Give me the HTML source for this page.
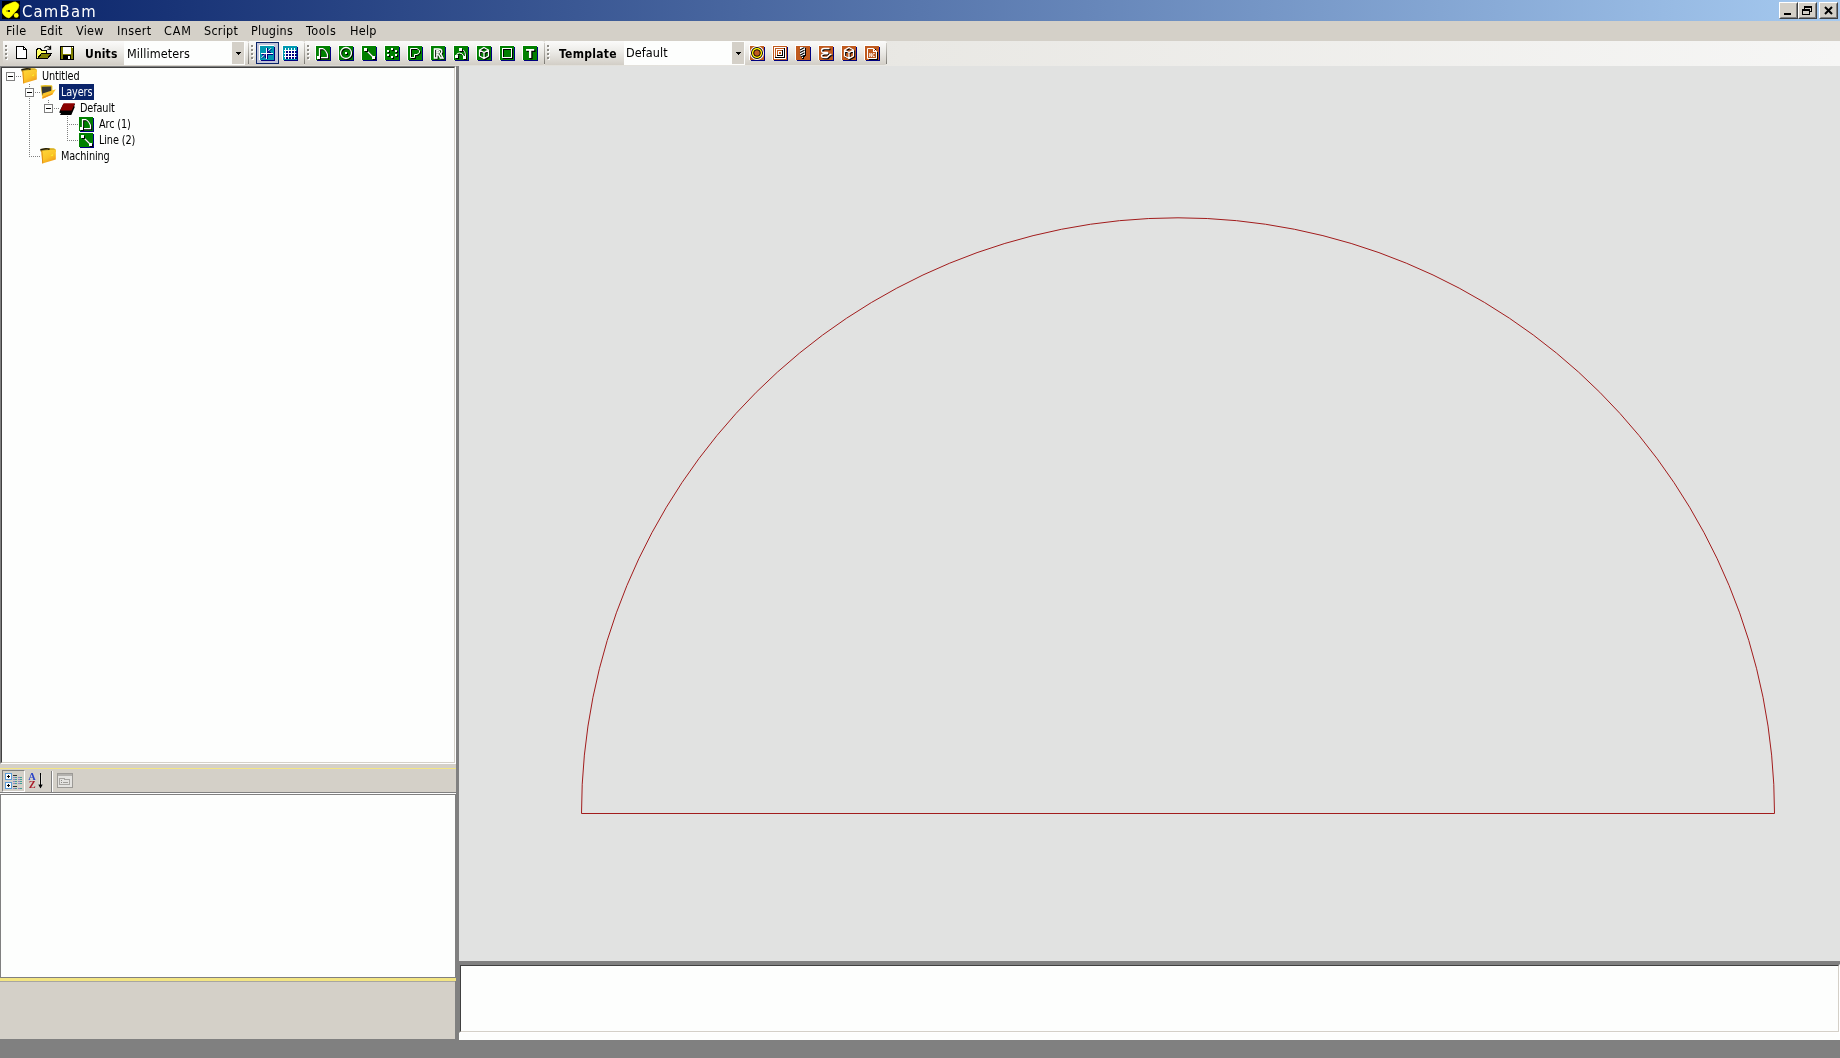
<!DOCTYPE html>
<html><head><meta charset="utf-8"><title>CamBam</title>
<style>
html,body{margin:0;padding:0;}
body{width:1840px;height:1058px;overflow:hidden;background:#808080;position:relative;font-family:"DejaVu Sans Condensed","DejaVu Sans","Liberation Sans",sans-serif;color:#000;}
#wrap{position:absolute;left:0;top:0;width:1840px;height:1058px;will-change:transform;}
.a{position:absolute;}
svg{position:absolute;overflow:hidden;}
.cr{shape-rendering:crispEdges;}
#title{left:0;top:0;width:1840px;height:21px;background:linear-gradient(90deg,#0a246a 0%,#a6caf0 100%);}
#cap{left:22px;top:2px;font-size:16.5px;line-height:20px;color:#fff;white-space:nowrap;letter-spacing:1.2px;}
.wb{top:2px;width:19px;height:17px;background:#d4d0c8;box-sizing:border-box;border:1px solid;border-color:#fff #404040 #404040 #fff;}
.wb i{position:absolute;left:0;top:0;right:0;bottom:0;border:1px solid;border-color:#d4d0c8 #808080 #808080 #d4d0c8;}
#menu{left:0;top:21px;width:1840px;height:20px;background:#d4d0c8;font-size:12.5px;letter-spacing:0.25px;}
#menu span{position:absolute;top:0;line-height:20px;white-space:nowrap;}
#tbrow{left:0;top:41px;width:1840px;height:25px;background:linear-gradient(90deg,#d4d0c8 0%,#e9e8e4 49%,#f6f6f5 100%);}
.strip{position:absolute;top:0;height:24px;background:linear-gradient(180deg,#fbfbfa 0%,#ecebe7 45%,#d2cec6 100%);border-radius:0 3px 3px 0;}
.strip .edge{position:absolute;right:0;top:2px;bottom:1px;width:1px;background:linear-gradient(180deg,#d0cec8,#7c7a74);}
.grip{position:absolute;left:2px;top:4px;width:3px;height:15px;}
.grip b{position:absolute;left:0;width:2px;height:2px;background:#8e8c86;box-shadow:1px 1px 0 #fff;}
.lbl{position:absolute;top:41px;height:24px;line-height:26px;font-size:12px;font-weight:bold;white-space:nowrap;letter-spacing:0.3px;}
.combo{position:absolute;top:41px;height:24px;background:#fdfefd;}
.combo span{position:absolute;left:3px;top:0;line-height:26px;font-size:12.5px;white-space:nowrap;letter-spacing:0.1px;}
.combo .btn{position:absolute;right:1px;top:1px;width:12px;height:22px;background:#d4d0c8;}
.combo .btn i{position:absolute;left:4px;top:10px;width:5px;height:1px;background:#000;box-shadow:0 0 0 #000;}
.combo .btn i:before{content:'';position:absolute;left:1px;top:1px;width:3px;height:1px;background:#000;}
.combo .btn i:after{content:'';position:absolute;left:2px;top:2px;width:1px;height:1px;background:#000;}
#tree{left:0;top:66px;width:456px;height:698px;background:#fdfefd;box-sizing:border-box;border:1px solid;border-color:#808080 #fff #fff #808080;}
#tree .in{position:absolute;left:0;top:0;right:0;bottom:0;border:1px solid;border-color:#404040 #d4d0c8 #d4d0c8 #404040;}
.tl{position:absolute;font-size:10.8px;line-height:16px;height:16px;white-space:nowrap;letter-spacing:-0.12px;transform:scaleY(1.09);transform-origin:0 12px;margin-top:1px;}
.eb{position:absolute;width:9px;height:9px;box-sizing:border-box;border:1px solid #808080;background:#fdfefd;}
.eb i{position:absolute;left:1px;top:3px;width:5px;height:1px;background:#000;margin:0;}
.dh{position:absolute;height:1px;background:repeating-linear-gradient(90deg,#808080 0,#808080 1px,transparent 1px,transparent 2px);}
.dv{position:absolute;width:1px;background:repeating-linear-gradient(180deg,#808080 0,#808080 1px,transparent 1px,transparent 2px);}
#leftbg{left:0;top:764px;width:455px;height:275px;background:#d4d0c8;}
#leftbg2{left:0;top:764px;width:456px;height:30px;background:#d4d0c8;}
#draw{left:459px;top:66px;width:1381px;height:895px;background:#e1e2e1;}
#log{left:459px;top:964px;width:1381px;height:69px;background:#fdfefd;box-sizing:border-box;border:1px solid;border-color:#808080 #fff #fff #808080;}
#log .in{position:absolute;left:0;top:0;right:0;bottom:0;border:1px solid;border-color:#404040 #d4d0c8 #d4d0c8 #404040;}
</style></head><body>
<div id="wrap">
<div id="title" class="a">
<svg style="left:2px;top:1px" width="18" height="18" viewBox="2 1 18 18"><rect x="2" y="1" width="18" height="18" fill="#000"/><g fill="#ffff00"><polygon points="15.6,1.9 18.3,3.7 18.9,5.4 18.1,8.3 16.6,10.4 14.6,12.5 12.9,14.6 11.2,16.4 8.9,17.9 6.2,17.1 4.2,15.4 2.7,13.3 2.1,11.2 2.7,8.7 4.2,6.9 5.4,5.4 8.3,4.2 11.2,3.1 13.7,2.1" stroke="#ffff00" stroke-width=".6" stroke-linejoin="round"/><circle cx="16.25" cy="15.4" r="2.4"/></g><circle cx="9" cy="11" r="1.1" fill="#000"/><rect x="6.3" y="10.4" width="1.6" height="1.2" fill="#6b6b00"/></svg>
<span id="cap" class="a">CamBam</span>
<div class="a wb" style="left:1779px"><i></i><svg class="cr" style="left:4px;top:10px" width="7" height="2"><rect width="7" height="2" fill="#000"/></svg></div>
<div class="a wb" style="left:1798px"><i></i><svg class="cr" style="left:3px;top:2px" width="11" height="11"><path d="M2 1H10V7H8V6H9V3H3V4H2ZM0 4H8V10H0ZM1 6V9H7V6Z" fill="#000" fill-rule="evenodd"/></svg></div>
<div class="a wb" style="left:1819px"><i></i><svg style="left:4px;top:3px" width="10" height="9"><path d="M1 1L8 8M8 1L1 8" stroke="#000" stroke-width="2" fill="none"/></svg></div>
</div>
<div id="menu" class="a">
<span style="left:6px;letter-spacing:0.5px">File</span>
<span style="left:40px;">Edit</span>
<span style="left:76px;">View</span>
<span style="left:117px;letter-spacing:0.4px">Insert</span>
<span style="left:164px;letter-spacing:0.9px">CAM</span>
<span style="left:204px;">Script</span>
<span style="left:251px;">Plugins</span>
<span style="left:306px;letter-spacing:0.6px">Tools</span>
<span style="left:350px;">Help</span>
</div>
<div id="tbrow" class="a">
<div class="strip" style="left:3px;width:246px"><div class="grip"><b style="top:0px"></b><b style="top:4px"></b><b style="top:8px"></b><b style="top:12px"></b></div><div class="edge"></div></div>
<div class="strip" style="left:249px;width:56px"><div class="grip"><b style="top:0px"></b><b style="top:4px"></b><b style="top:8px"></b><b style="top:12px"></b></div><div class="edge"></div></div>
<div class="strip" style="left:305px;width:240px"><div class="grip"><b style="top:0px"></b><b style="top:4px"></b><b style="top:8px"></b><b style="top:12px"></b></div><div class="edge"></div></div>
<div class="strip" style="left:545px;width:342px"><div class="grip"><b style="top:0px"></b><b style="top:4px"></b><b style="top:8px"></b><b style="top:12px"></b></div><div class="edge"></div></div>
</div>
<svg class="cr" style="left:315px;top:45px" width="16" height="16" viewBox="0 0 16 16"><path d="M0 0H15V1H1V15H0Z" fill="#fff"/><path d="M15 2H16V16H2V15H15Z" fill="#000080"/><rect x="1" y="1" width="14" height="14" fill="#008000"/><path d="M4.5 11V3.5H7.5Q11 5 12.5 9.5V12.5H4" transform="translate(1,1)" fill="none" stroke="#000" stroke-width="1.25" shape-rendering="geometricPrecision"/><path d="M4.5 11V3.5H7.5Q11 5 12.5 9.5V12.5H4" fill="none" stroke="#fff" stroke-width="1.25" shape-rendering="geometricPrecision"/><rect x="3" y="12" width="3" height="3" fill="#000"/><rect x="2" y="11" width="3" height="3" fill="#fff"/></svg>
<svg class="cr" style="left:338px;top:45px" width="16" height="16" viewBox="0 0 16 16"><path d="M0 0H15V1H1V15H0Z" fill="#fff"/><path d="M15 2H16V16H2V15H15Z" fill="#000080"/><rect x="1" y="1" width="14" height="14" fill="#008000"/><circle cx="9" cy="9" r="5.5" fill="none" stroke="#000" stroke-width="1.3" shape-rendering="geometricPrecision"/><circle cx="8" cy="8" r="5.5" fill="none" stroke="#fff" stroke-width="1.3" shape-rendering="geometricPrecision"/><rect x="8" y="8" width="2" height="2" fill="#000"/><rect x="7" y="7" width="2" height="2" fill="#fff"/></svg>
<svg class="cr" style="left:361px;top:45px" width="16" height="16" viewBox="0 0 16 16"><path d="M0 0H15V1H1V15H0Z" fill="#fff"/><path d="M15 2H16V16H2V15H15Z" fill="#000080"/><rect x="1" y="1" width="14" height="14" fill="#008000"/><path d="M4.5 4.5L12.5 12.5" transform="translate(1,1)" fill="none" stroke="#000" stroke-width="1.2" shape-rendering="geometricPrecision"/><path d="M4.5 4.5L12.5 12.5" fill="none" stroke="#fff" stroke-width="1.2" shape-rendering="geometricPrecision"/><rect x="4" y="4" width="3" height="3" fill="#000"/><rect x="12" y="12" width="3" height="3" fill="#000"/><rect x="3" y="3" width="3" height="3" fill="#fff"/><rect x="11" y="11" width="3" height="3" fill="#fff"/></svg>
<svg class="cr" style="left:384px;top:45px" width="16" height="16" viewBox="0 0 16 16"><path d="M0 0H15V1H1V15H0Z" fill="#fff"/><path d="M15 2H16V16H2V15H15Z" fill="#000080"/><rect x="1" y="1" width="14" height="14" fill="#008000"/><rect x="8" y="4" width="2" height="2" fill="#000"/><rect x="4" y="6" width="2" height="2" fill="#000"/><rect x="12" y="6" width="2" height="2" fill="#000"/><rect x="4" y="10" width="2" height="2" fill="#000"/><rect x="12" y="10" width="2" height="2" fill="#000"/><rect x="8" y="12" width="2" height="2" fill="#000"/><rect x="7" y="3" width="2" height="2" fill="#fff"/><rect x="3" y="5" width="2" height="2" fill="#fff"/><rect x="11" y="5" width="2" height="2" fill="#fff"/><rect x="3" y="9" width="2" height="2" fill="#fff"/><rect x="11" y="9" width="2" height="2" fill="#fff"/><rect x="7" y="11" width="2" height="2" fill="#fff"/></svg>
<svg class="cr" style="left:407px;top:45px" width="16" height="16" viewBox="0 0 16 16"><path d="M0 0H15V1H1V15H0Z" fill="#fff"/><path d="M15 2H16V16H2V15H15Z" fill="#000080"/><rect x="1" y="1" width="14" height="14" fill="#008000"/><path d="M3.5 3.5H10L12.5 5.5V7.5L10 9.5H7.5V12.5H3.5Z" transform="translate(1,1)" fill="none" stroke="#000" stroke-width="1" shape-rendering="geometricPrecision"/><path d="M3.5 3.5H10L12.5 5.5V7.5L10 9.5H7.5V12.5H3.5Z" fill="none" stroke="#fff" stroke-width="1" shape-rendering="geometricPrecision"/></svg>
<svg class="cr" style="left:430px;top:45px" width="16" height="16" viewBox="0 0 16 16"><path d="M0 0H15V1H1V15H0Z" fill="#fff"/><path d="M15 2H16V16H2V15H15Z" fill="#000080"/><rect x="1" y="1" width="14" height="14" fill="#008000"/><text x="3.2" y="12.7" font-family="DejaVu Sans,Liberation Sans,sans-serif" font-weight="bold" font-size="13" stroke-linejoin="miter" fill="none" stroke="#000" stroke-width="1.2" transform="translate(1,1)">R</text><text x="3.2" y="12.7" font-family="DejaVu Sans,Liberation Sans,sans-serif" font-weight="bold" font-size="13" stroke-linejoin="miter" fill="none" stroke="#fff" stroke-width="1.35">R</text></svg>
<svg class="cr" style="left:453px;top:45px" width="16" height="16" viewBox="0 0 16 16"><path d="M0 0H15V1H1V15H0Z" fill="#fff"/><path d="M15 2H16V16H2V15H15Z" fill="#000080"/><rect x="1" y="1" width="14" height="14" fill="#008000"/><path d="M3.5 10.5Q3.5 8 6.5 8Q9.5 8 11 11.5M8.5 4.5Q12.5 5 12.5 11" transform="translate(1,1)" fill="none" stroke="#000" stroke-width="1" shape-rendering="geometricPrecision"/><path d="M3.5 10.5Q3.5 8 6.5 8Q9.5 8 11 11.5M8.5 4.5Q12.5 5 12.5 11" fill="none" stroke="#fff" stroke-width="1" shape-rendering="geometricPrecision"/><rect x="7" y="4" width="3" height="3" fill="#000"/><rect x="3" y="11" width="3" height="3" fill="#000"/><rect x="11" y="12" width="3" height="3" fill="#000"/><rect x="6" y="3" width="3" height="3" fill="#fff"/><rect x="2" y="10" width="3" height="3" fill="#fff"/><rect x="10" y="11" width="3" height="3" fill="#fff"/></svg>
<svg class="cr" style="left:476px;top:45px" width="16" height="16" viewBox="0 0 16 16"><path d="M0 0H15V1H1V15H0Z" fill="#fff"/><path d="M15 2H16V16H2V15H15Z" fill="#000080"/><rect x="1" y="1" width="14" height="14" fill="#008000"/><path d="M8 2.5L12.5 5V11L8 13.5L3.5 11V5ZM3.5 5L8 7.5L12.5 5M8 7.5V13.5" transform="translate(1,1)" fill="none" stroke="#000" stroke-width="1.25" shape-rendering="geometricPrecision"/><path d="M8 2.5L12.5 5V11L8 13.5L3.5 11V5ZM3.5 5L8 7.5L12.5 5M8 7.5V13.5" fill="none" stroke="#fff" stroke-width="1.25" shape-rendering="geometricPrecision"/></svg>
<svg class="cr" style="left:499px;top:45px" width="16" height="16" viewBox="0 0 16 16"><path d="M0 0H15V1H1V15H0Z" fill="#fff"/><path d="M15 2H16V16H2V15H15Z" fill="#000080"/><rect x="1" y="1" width="14" height="14" fill="#008000"/><path d="M3.5 3.5H12.5V12.5H3.5Z" transform="translate(1,1)" fill="none" stroke="#000" stroke-width="1" /><path d="M3.5 3.5H12.5V12.5H3.5Z" fill="none" stroke="#fff" stroke-width="1" /></svg>
<svg class="cr" style="left:522px;top:45px" width="16" height="16" viewBox="0 0 16 16"><path d="M0 0H15V1H1V15H0Z" fill="#fff"/><path d="M15 2H16V16H2V15H15Z" fill="#000080"/><rect x="1" y="1" width="14" height="14" fill="#008000"/><text x="3.9" y="13" font-family="DejaVu Sans,Liberation Sans,sans-serif" font-weight="bold" font-size="12" fill="#000" stroke="#000" stroke-width=".5" transform="translate(1.2,1.2)">T</text><text x="3.9" y="13" font-family="DejaVu Sans,Liberation Sans,sans-serif" font-weight="bold" font-size="12" fill="#fff">T</text></svg>
<div class="a" style="left:256px;top:42px;width:23px;height:22px;box-sizing:border-box;border:1px solid #0a246a;background:#c1c4d8"></div>
<svg class="cr" style="left:259px;top:45px" width="16" height="16" viewBox="0 0 16 16"><path d="M0 0H15V1H1V15H0Z" fill="#fff"/><path d="M15 2H16V16H2V15H15Z" fill="#000080"/><rect x="1" y="1" width="14" height="14" fill="#0098b0"/><rect x="8" y="3" width="1" height="11" fill="#000080"/><rect x="3" y="9" width="11" height="1" fill="#000080"/><rect x="7" y="3" width="1" height="11" fill="#fff"/><rect x="2" y="8" width="12" height="1" fill="#fff"/><path d="M12.5 4L9.5 7M9.5 5V7.5H12M3 13.5L6.5 10M4 10.5H6.5V13" fill="none" stroke="#000080" shape-rendering="geometricPrecision"/><path d="M12 3.2L9 6.2M2.5 12.8L5.8 9.5" fill="none" stroke="#fff" stroke-width=".9" shape-rendering="geometricPrecision"/></svg>
<svg class="cr" style="left:282px;top:45px" width="16" height="16" viewBox="0 0 16 16"><path d="M0 0H15V1H1V15H0Z" fill="#fff"/><path d="M15 2H16V16H2V15H15Z" fill="#000080"/><rect x="1" y="1" width="14" height="14" fill="#0098b0"/><rect x="4" y="6" width="2" height="2" fill="#000080"/><rect x="4" y="9" width="2" height="2" fill="#000080"/><rect x="4" y="12" width="2" height="2" fill="#000080"/><rect x="7" y="6" width="2" height="2" fill="#000080"/><rect x="7" y="9" width="2" height="2" fill="#000080"/><rect x="7" y="12" width="2" height="2" fill="#000080"/><rect x="10" y="6" width="2" height="2" fill="#000080"/><rect x="10" y="9" width="2" height="2" fill="#000080"/><rect x="10" y="12" width="2" height="2" fill="#000080"/><rect x="13" y="6" width="2" height="2" fill="#000080"/><rect x="13" y="9" width="2" height="2" fill="#000080"/><rect x="13" y="12" width="2" height="2" fill="#000080"/><rect x="3" y="3" width="1" height="11" fill="#fff"/><rect x="6" y="3" width="1" height="11" fill="#fff"/><rect x="9" y="3" width="1" height="11" fill="#fff"/><rect x="12" y="3" width="1" height="11" fill="#fff"/><rect x="2" y="5" width="12" height="1" fill="#fff"/><rect x="2" y="8" width="12" height="1" fill="#fff"/><rect x="2" y="11" width="12" height="1" fill="#fff"/></svg>
<svg class="cr" style="left:749px;top:45px" width="16" height="16" viewBox="0 0 16 16"><path d="M0 0H15V1H1V15H0Z" fill="#fff"/><path d="M15 2H16V16H2V15H15Z" fill="#000080"/><rect x="1" y="1" width="14" height="14" fill="#c05a1e"/><circle cx="8" cy="8" r="6.15" fill="none" stroke="#fff" stroke-width="1.7" shape-rendering="geometricPrecision"/><circle cx="8" cy="8" r="5.4" fill="none" stroke="#000" stroke-width="1.1" shape-rendering="geometricPrecision"/><circle cx="8" cy="8" r="4.3" fill="none" stroke="#ffff00" stroke-width="1.4" shape-rendering="geometricPrecision"/><circle cx="8" cy="8" r="3.3" fill="none" stroke="#000" stroke-width=".9" shape-rendering="geometricPrecision"/><path d="M1 1H4L1 4ZM15 1V4L12 1ZM1 15V12L4 15ZM15 15H12L15 12Z" fill="#c05a1e"/></svg>
<svg class="cr" style="left:772px;top:45px" width="16" height="16" viewBox="0 0 16 16"><path d="M0 0H15V1H1V15H0Z" fill="#fff"/><path d="M15 2H16V16H2V15H15Z" fill="#000080"/><rect x="1" y="1" width="14" height="14" fill="#c05a1e"/><rect x="2" y="2" width="12" height="12" fill="#fff"/><rect x="3" y="3" width="10" height="10" fill="#c05a1e"/><rect x="4" y="4" width="8" height="8" fill="#fff"/><rect x="5" y="5" width="6" height="6" fill="#c05a1e"/><rect x="6" y="6" width="4" height="4" fill="#fff"/><rect x="7" y="7" width="2" height="2" fill="#c05a1e"/><path d="M12 3V12H3V13H13V3ZM10 5V10H5V11H11V5Z" fill="#000"/></svg>
<svg class="cr" style="left:795px;top:45px" width="16" height="16" viewBox="0 0 16 16"><path d="M0 0H15V1H1V15H0Z" fill="#fff"/><path d="M15 2H16V16H2V15H15Z" fill="#000080"/><rect x="1" y="1" width="14" height="14" fill="#c05a1e"/><path d="M6 3H10.5V11L8 14.5L6 11Z" fill="#000"/><path d="M5 2H9.5V10L7.2 13.5L5 10Z" fill="#fff"/><path d="M5 5L9.5 2.6M5 7.6L9.5 5.2M5 10.2L9.5 7.8M6 12L9.5 10.2" stroke="#000" stroke-width="1.1" fill="none" shape-rendering="geometricPrecision"/></svg>
<svg class="cr" style="left:818px;top:45px" width="16" height="16" viewBox="0 0 16 16"><path d="M0 0H15V1H1V15H0Z" fill="#fff"/><path d="M15 2H16V16H2V15H15Z" fill="#000080"/><rect x="1" y="1" width="14" height="14" fill="#c05a1e"/><path d="M11.5 3.5H6Q3.5 3.5 3.5 5.8Q3.5 7.6 6 7.5H9.5Q10.5 8.2 9 8.8H6Q3.5 9 3.5 10.8Q3.5 12.5 6 12.5H9L12 9.5H13.5" transform="translate(1,1)" fill="none" stroke="#000" stroke-width="1.3" shape-rendering="geometricPrecision"/><path d="M11.5 3.5H6Q3.5 3.5 3.5 5.8Q3.5 7.6 6 7.5H9.5Q10.5 8.2 9 8.8H6Q3.5 9 3.5 10.8Q3.5 12.5 6 12.5H9L12 9.5H13.5" fill="none" stroke="#fff" stroke-width="1.3" shape-rendering="geometricPrecision"/></svg>
<svg class="cr" style="left:841px;top:45px" width="16" height="16" viewBox="0 0 16 16"><path d="M0 0H15V1H1V15H0Z" fill="#fff"/><path d="M15 2H16V16H2V15H15Z" fill="#000080"/><rect x="1" y="1" width="14" height="14" fill="#c05a1e"/><path d="M8 2.5L12.5 5V11L8 13.5L3.5 11V5ZM3.5 5L8 7.5L12.5 5M8 7.5V13.5" transform="translate(1,1)" fill="none" stroke="#000" stroke-width="1.25" shape-rendering="geometricPrecision"/><path d="M8 2.5L12.5 5V11L8 13.5L3.5 11V5ZM3.5 5L8 7.5L12.5 5M8 7.5V13.5" fill="none" stroke="#fff" stroke-width="1.25" shape-rendering="geometricPrecision"/></svg>
<svg class="cr" style="left:864px;top:45px" width="16" height="16" viewBox="0 0 16 16"><path d="M0 0H15V1H1V15H0Z" fill="#fff"/><path d="M15 2H16V16H2V15H15Z" fill="#000080"/><rect x="1" y="1" width="14" height="14" fill="#c05a1e"/><path d="M13.5 7V14.5H4.5" fill="none" stroke="#000"/><path d="M3.5 3.5H9.5L12.5 6.5V13.5H3.5Z" fill="none" stroke="#fff" shape-rendering="geometricPrecision"/><path d="M9.5 3.5V6.5H12.5" fill="none" stroke="#fff"/><rect x="11" y="4" width="1" height="1" fill="#000"/><text x="5" y="12" textLength="6" lengthAdjust="spacingAndGlyphs" font-family="DejaVu Sans Condensed,DejaVu Sans,sans-serif" font-weight="bold" font-size="5.4" fill="#fff">NC</text></svg>
<svg class="cr" style="left:16px;top:46px" width="11" height="13"><path d="M.5 .5H7.5L10.5 3.5V12.5H.5Z" fill="#fff" stroke="#000"/><path d="M7.5 .5V3.5H10.5" fill="none" stroke="#000"/></svg>
<svg class="cr" style="left:36px;top:45px" width="16" height="14"><path d="M.5 13.5V4.5H1.5V3.5H4.5V4.5H5.5V5.5H10.5V7.5" fill="#ffff80" stroke="#000"/><path d="M1 6H10V8H5L1 12Z" fill="#ffff60"/><path d="M1.5 13.5L5.5 8.5H15.5L11.5 13.5Z" fill="#808000" stroke="#000"/><path d="M8.3 3.2Q10 .2 13 1.8L14.3 3.6M14.6 .8V4.2H11.4" fill="none" stroke="#000" stroke-width="1.1" shape-rendering="geometricPrecision"/></svg>
<svg class="cr" style="left:60px;top:46px" width="14" height="14"><rect x=".5" y=".5" width="13" height="13" fill="#808000" stroke="#000"/><rect x="3" y="1" width="8" height="7" fill="#fff"/><rect x="3" y="9" width="8" height="4" fill="#000"/><rect x="8" y="10" width="2" height="3" fill="#fff"/><rect x="12" y="1" width="1" height="1" fill="#fff"/></svg>
<span class="lbl" style="left:85px;letter-spacing:0.15px">Units</span>
<div class="combo" style="left:124px;width:121px"><span>Millimeters</span><div class="btn"><i></i></div></div>
<span class="lbl" style="left:559px">Template</span>
<div class="combo" style="left:624px;width:121px"><span style="top:-1px;left:2px">Default</span><div class="btn"><i></i></div></div>
<div id="tree" class="a"><div class="in"></div></div>
<svg style="left:21px;top:68px" width="16" height="16" viewBox="0 0 16 16"><defs><linearGradient id="fg21" x1="0" y1="0" x2=".6" y2="1"><stop offset="0" stop-color="#ffd83a"/><stop offset=".6" stop-color="#fbc428"/><stop offset="1" stop-color="#f09a18"/></linearGradient></defs><path d="M.2 1.2L5.5 .1L14 .2L15.7 1.6V4H1Z" fill="#d8b020"/><path d="M.2 1.1L6 .1L9.8 .4L9.4 2L5 2.4L1 3.8Z" fill="#1c1a10"/><path d="M2.5 2L6 1.4L8.4 1.5L8.2 1.9L2.6 2.6Z" fill="#b89018"/><path d="M1.3 2.6L15.8 1.8V11.6L2.3 15.6Z" fill="url(#fg21)"/><path d="M1.3 2.6L2.3 15.6L3.2 15.3L2.3 2.6Z" fill="#e08a10"/><path d="M11 7.8L12.6 6V8Z" fill="#ffff30"/></svg>
<svg style="left:40px;top:84px" width="16" height="16" viewBox="0 0 16 16"><path d="M.6 1.6L5 1L11.6 1.2L12.4 2V8.5L2 12.5Z" fill="#e8c020"/><path d="M1.6 2.8L11.2 2.4V8L2.2 11Z" fill="#3a3a34"/><path d="M2.6 9.6L15.8 5.2L12.4 10.4L2.4 14.8Z" fill="#fbc428"/><path d="M2.4 13L12.6 9L12.4 10.4L2.4 14.8Z" fill="#f09a18"/></svg>
<svg style="left:59px;top:100px" width="16" height="16" viewBox="0 0 16 16"><path d="M.5 11.5L4.2 4H16L15 6.5H16L12.3 15H1L2 13H.5Z" fill="#000"/><path d="M4.6 3.2H16L12.6 10.6H1.2Z" fill="#8b0000"/></svg>
<svg style="left:40px;top:148px" width="16" height="16" viewBox="0 0 16 16"><defs><linearGradient id="fg40" x1="0" y1="0" x2=".6" y2="1"><stop offset="0" stop-color="#ffd83a"/><stop offset=".6" stop-color="#fbc428"/><stop offset="1" stop-color="#f09a18"/></linearGradient></defs><path d="M.2 1.2L5.5 .1L14 .2L15.7 1.6V4H1Z" fill="#d8b020"/><path d="M.2 1.1L6 .1L9.8 .4L9.4 2L5 2.4L1 3.8Z" fill="#1c1a10"/><path d="M2.5 2L6 1.4L8.4 1.5L8.2 1.9L2.6 2.6Z" fill="#b89018"/><path d="M1.3 2.6L15.8 1.8V11.6L2.3 15.6Z" fill="url(#fg40)"/><path d="M1.3 2.6L2.3 15.6L3.2 15.3L2.3 2.6Z" fill="#e08a10"/><path d="M11 7.8L12.6 6V8Z" fill="#ffff30"/></svg>
<svg class="cr" style="left:78px;top:116px" width="16" height="16" viewBox="0 0 16 16"><path d="M15 2H16V16H2V15H15Z" fill="#000080"/><rect x="1" y="1" width="14" height="14" fill="#008000"/><path d="M4.5 11V3.5H7.5Q11 5 12.5 9.5V12.5H4" transform="translate(1,1)" fill="none" stroke="#000" stroke-width="1.25" shape-rendering="geometricPrecision"/><path d="M4.5 11V3.5H7.5Q11 5 12.5 9.5V12.5H4" fill="none" stroke="#fff" stroke-width="1.25" shape-rendering="geometricPrecision"/><rect x="3" y="12" width="3" height="3" fill="#000"/><rect x="2" y="11" width="3" height="3" fill="#fff"/></svg>
<svg class="cr" style="left:78px;top:132px" width="16" height="16" viewBox="0 0 16 16"><path d="M15 2H16V16H2V15H15Z" fill="#000080"/><rect x="1" y="1" width="14" height="14" fill="#008000"/><path d="M4.5 4.5L12.5 12.5" transform="translate(1,1)" fill="none" stroke="#000" stroke-width="1.2" shape-rendering="geometricPrecision"/><path d="M4.5 4.5L12.5 12.5" fill="none" stroke="#fff" stroke-width="1.2" shape-rendering="geometricPrecision"/><rect x="4" y="4" width="3" height="3" fill="#000"/><rect x="12" y="12" width="3" height="3" fill="#000"/><rect x="3" y="3" width="3" height="3" fill="#fff"/><rect x="11" y="11" width="3" height="3" fill="#fff"/></svg>
<div class="dh" style="left:16px;top:76px;width:5px"></div>
<div class="dv" style="left:29px;top:84px;height:4px"></div>
<div class="dv" style="left:29px;top:98px;height:59px"></div>
<div class="dh" style="left:35px;top:92px;width:5px"></div>
<div class="dh" style="left:29px;top:156px;width:11px"></div>
<div class="dv" style="left:48px;top:100px;height:4px"></div>
<div class="dh" style="left:54px;top:108px;width:5px"></div>
<div class="dv" style="left:67px;top:116px;height:25px"></div>
<div class="dh" style="left:67px;top:124px;width:11px"></div>
<div class="dh" style="left:67px;top:140px;width:11px"></div>
<div class="eb" style="left:6px;top:72px"><i></i></div>
<div class="eb" style="left:25px;top:88px"><i></i></div>
<div class="eb" style="left:44px;top:104px"><i></i></div>
<div class="a" style="left:59px;top:84px;width:35px;height:16px;background:#0a246a"></div>
<span class="tl" style="left:42px;top:68px;color:#000">Untitled</span>
<span class="tl" style="left:61px;top:84px;color:#fff">Layers</span>
<span class="tl" style="left:80px;top:100px;color:#000">Default</span>
<span class="tl" style="left:99px;top:116px;color:#000">Arc (1)</span>
<span class="tl" style="left:99px;top:132px;color:#000">Line (2)</span>
<span class="tl" style="left:61px;top:148px;color:#000">Machining</span>
<div id="leftbg" class="a"></div><div id="leftbg2" class="a"></div>
<div class="a" style="left:0;top:768px;width:456px;height:1px;background:#f3e583"></div>
<div class="a" style="left:2px;top:770px;width:23px;height:22px;box-sizing:border-box;border:1px solid;border-color:#808080 #fff #fff #808080"></div>
<svg class="cr" style="left:5px;top:773px" width="17" height="17"><rect x=".5" y=".5" width="6" height="6" fill="#fff" stroke="#5a9bd8"/><rect x=".5" y="9.5" width="6" height="6" fill="#fff" stroke="#5a9bd8"/><path d="M2 3H5V4H2ZM3 2H4V5H3ZM2 12H5V13H2ZM3 11H4V14H3Z" fill="#000"/><rect x="8" y="2" width="4" height="1" fill="#303030"/><rect x="8" y="13" width="4" height="1" fill="#303030"/><rect x="8" y="4" width="2" height="1" fill="#9088c8"/><rect x="10" y="4" width="2" height="1" fill="#40a098"/><rect x="13" y="4" width="2" height="1" fill="#9088c8"/><rect x="15" y="4" width="2" height="1" fill="#40a098"/><rect x="8" y="6" width="2" height="1" fill="#9088c8"/><rect x="10" y="6" width="2" height="1" fill="#40a098"/><rect x="13" y="6" width="2" height="1" fill="#9088c8"/><rect x="15" y="6" width="2" height="1" fill="#40a098"/><rect x="8" y="8" width="2" height="1" fill="#9088c8"/><rect x="10" y="8" width="2" height="1" fill="#40a098"/><rect x="13" y="8" width="2" height="1" fill="#9088c8"/><rect x="15" y="8" width="2" height="1" fill="#40a098"/><rect x="8" y="10" width="2" height="1" fill="#9088c8"/><rect x="10" y="10" width="2" height="1" fill="#40a098"/><rect x="13" y="10" width="2" height="1" fill="#9088c8"/><rect x="15" y="10" width="2" height="1" fill="#40a098"/><rect x="8" y="15" width="2" height="1" fill="#9088c8"/><rect x="10" y="15" width="2" height="1" fill="#40a098"/><rect x="13" y="15" width="2" height="1" fill="#9088c8"/><rect x="15" y="15" width="2" height="1" fill="#40a098"/></svg>
<svg style="left:27px;top:771px" width="18" height="20"><text x="1.2" y="9.2" font-family="Liberation Serif,DejaVu Serif,serif" font-weight="bold" font-size="10.4" fill="#2a43c8">A</text><text x="1.8" y="17.2" font-family="Liberation Serif,DejaVu Serif,serif" font-weight="bold" font-size="10.4" fill="#a81c28">Z</text><path d="M12.5 4H14.5V13H16L13.5 18L11 13H12.5Z" fill="#f4f3f0"/><path d="M13 2H14V14H13Z" fill="#000"/><path d="M11.2 13.4H15.8L13.5 17.6Z" fill="#000"/></svg>
<div class="a" style="left:51px;top:771px;width:1px;height:21px;background:#808080"></div><div class="a" style="left:52px;top:771px;width:1px;height:21px;background:#fff"></div>
<svg class="cr" style="left:57px;top:773px" width="16" height="15"><rect x=".5" y=".5" width="15" height="14" fill="#e4e3e0" stroke="#9c9a96"/><rect x="1" y="1" width="14" height="2" fill="#b4b2ae"/><path d="M2.5 11.5V5.5H7.5V6.5H12.5V11.5Z" fill="none" stroke="#a8a6a2"/><rect x="4" y="7" width="1" height="1" fill="#8c8a86"/><rect x="4" y="9" width="1" height="1" fill="#8c8a86"/><rect x="6" y="9" width="5" height="1" fill="#a09e9a"/></svg>
<div class="a" style="left:0;top:792px;width:456px;height:1px;background:#808080"></div><div class="a" style="left:0;top:793px;width:456px;height:1px;background:#fff"></div>
<div class="a" style="left:0;top:794px;width:456px;height:184px;box-sizing:border-box;border:1px solid #808080;background:#fdfefd"></div>
<div class="a" style="left:0;top:978px;width:456px;height:3px;background:#f3e583"></div>
<div class="a" style="left:0;top:981px;width:455px;height:1px;background:#a8a6a0"></div>
<div id="draw" class="a"><svg style="left:0;top:0" width="1381" height="895" viewBox="459 66 1381 895"><path d="M581.5 813.5A596.5 595.7 0 0 1 1774.5 813.5Z" fill="none" stroke="#a21c1c" stroke-width="1"/></svg></div>
<div class="a" style="left:459px;top:1032px;width:1381px;height:8px;background:#fdfefd"></div>
<div id="log" class="a"><div class="in"></div></div>
</div>
</body></html>
